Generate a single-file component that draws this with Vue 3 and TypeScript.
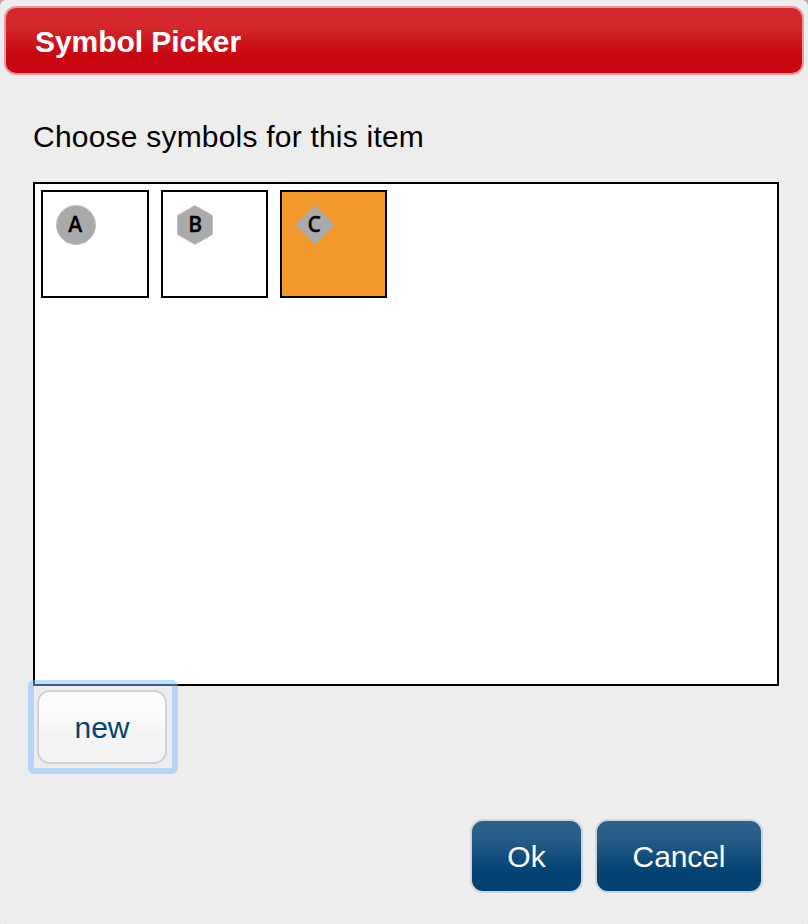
<script setup lang="ts">
import { ref } from 'vue'

interface SymbolItem {
  letter: string
  shape: 'circle' | 'hexagon' | 'diamond'
}

const symbols: SymbolItem[] = [
  { letter: 'A', shape: 'circle' },
  { letter: 'B', shape: 'hexagon' },
  { letter: 'C', shape: 'diamond' },
]
const selected = ref('C')
</script>

<template>
  <main class="dialog">
    <header class="title-bar"><h1>Symbol Picker</h1></header>
    <section class="content">
      <p class="prompt">Choose symbols for this item</p>
      <div class="symbols">
        <div
          v-for="s in symbols"
          :key="s.letter"
          class="tile"
          :class="[s.shape, { selected: selected === s.letter }]"
          @click="selected = s.letter"
        >
          <svg class="icon" width="40" height="40" viewBox="0 0 40 40">
            <g fill="#aaa" stroke="#bfbfbf" stroke-width="1">
              <circle v-if="s.shape === 'circle'" cx="20" cy="20" r="19.5" />
              <path v-else-if="s.shape === 'hexagon'" d="M19 .5 36.5 10.5V29.5L19 39.5 1.5 29.5V10.5Z" />
              <path v-else d="M20 .7 39.3 20 20 39.3 .7 20Z" stroke="#aaa" />
            </g>
            <text transform="translate(19.2 27) scale(.96 1)" text-anchor="middle">{{ s.letter }}</text>
          </svg>
        </div>
      </div>
      <div class="focus-ring"><button class="btn new">new</button></div>
    </section>
    <footer class="actions">
      <button class="btn primary ok">Ok</button>
      <button class="btn primary cancel">Cancel</button>
    </footer>
  </main>
</template>

<style>
body {
  margin: 0;
  background: #c4a0a0;
}
</style>

<style scoped>
.dialog {
  box-sizing: border-box;
  width: 808px;
  height: 924px;
  padding: 6px 4px 0;
  border-radius: 6px 6px 1px 1px;
  background: #ededed;
  font-family: "Liberation Sans", Arial, sans-serif;
  overflow: hidden;
}
.title-bar {
  box-sizing: border-box;
  height: 69px;
  padding-left: 29px;
  border: 2px solid #e69a9e;
  border-radius: 12px;
  background: linear-gradient(#d4282d 0%, #d4282d 28%, #c90812 70%, #c90610 100%);
  display: flex;
  align-items: center;
}
h1 {
  margin: 0;
  color: #fff;
  font-size: 30px;
  line-height: 36px;
  font-weight: bold;
  letter-spacing: -0.05px;
  padding-top: 2px;
}
.content {
  padding: 44px 25px 0 29px;
}
.prompt {
  margin: 0 0 27px;
  font-size: 30px;
  line-height: 36px;
  letter-spacing: 0.21px;
  color: #000;
  white-space: nowrap;
}
.symbols {
  box-sizing: border-box;
  height: 504px;
  border: 2px solid #000;
  background: #fff;
  padding: 6px;
  display: flex;
  align-items: flex-start;
  gap: 12px;
}
.tile {
  box-sizing: border-box;
  width: 107px;
  height: 108px;
  border: 2px solid #000;
  padding: 13px;
  background: #fff;
}
.tile.circle {
  width: 108px;
}
.tile.selected {
  background: #f2982c;
}
.icon {
  display: block;
}
.icon text {
  font: 600 22px "Open Sans", "Noto Sans", sans-serif;
  fill: #000;
  stroke: #000;
  stroke-width: 0.3px;
}
.focus-ring {
  position: relative;
  box-sizing: border-box;
  width: 150px;
  height: 94px;
  margin: -6px 0 0 -5px;
  padding: 4px 3px;
  border: 6px solid rgba(130, 191, 255, 0.5);
  border-radius: 6px;
}
.btn {
  box-sizing: border-box;
  display: flex;
  align-items: center;
  justify-content: center;
  height: 74px;
  margin: 0;
  padding: 2px 0 0;
  border: 2px solid #cdd3d8;
  border-radius: 13px;
  font-family: inherit;
  font-size: 30px;
  line-height: 36px;
}
.new {
  width: 130px;
  color: #044375;
  background: linear-gradient(#fdfdfd, #fafafa 40%, #f4f4f4 60%, #f4f4f4);
}
.actions {
  display: flex;
  justify-content: flex-end;
  gap: 12px;
  padding: 45px 41px 0 0;
}
.primary {
  color: #fff;
  background: linear-gradient(#2b618c 0%, #275d88 25%, #044375 70%, #044171 100%);
}
.ok {
  width: 113px;
}
.cancel {
  width: 168px;
  letter-spacing: -0.1px;
}
</style>
